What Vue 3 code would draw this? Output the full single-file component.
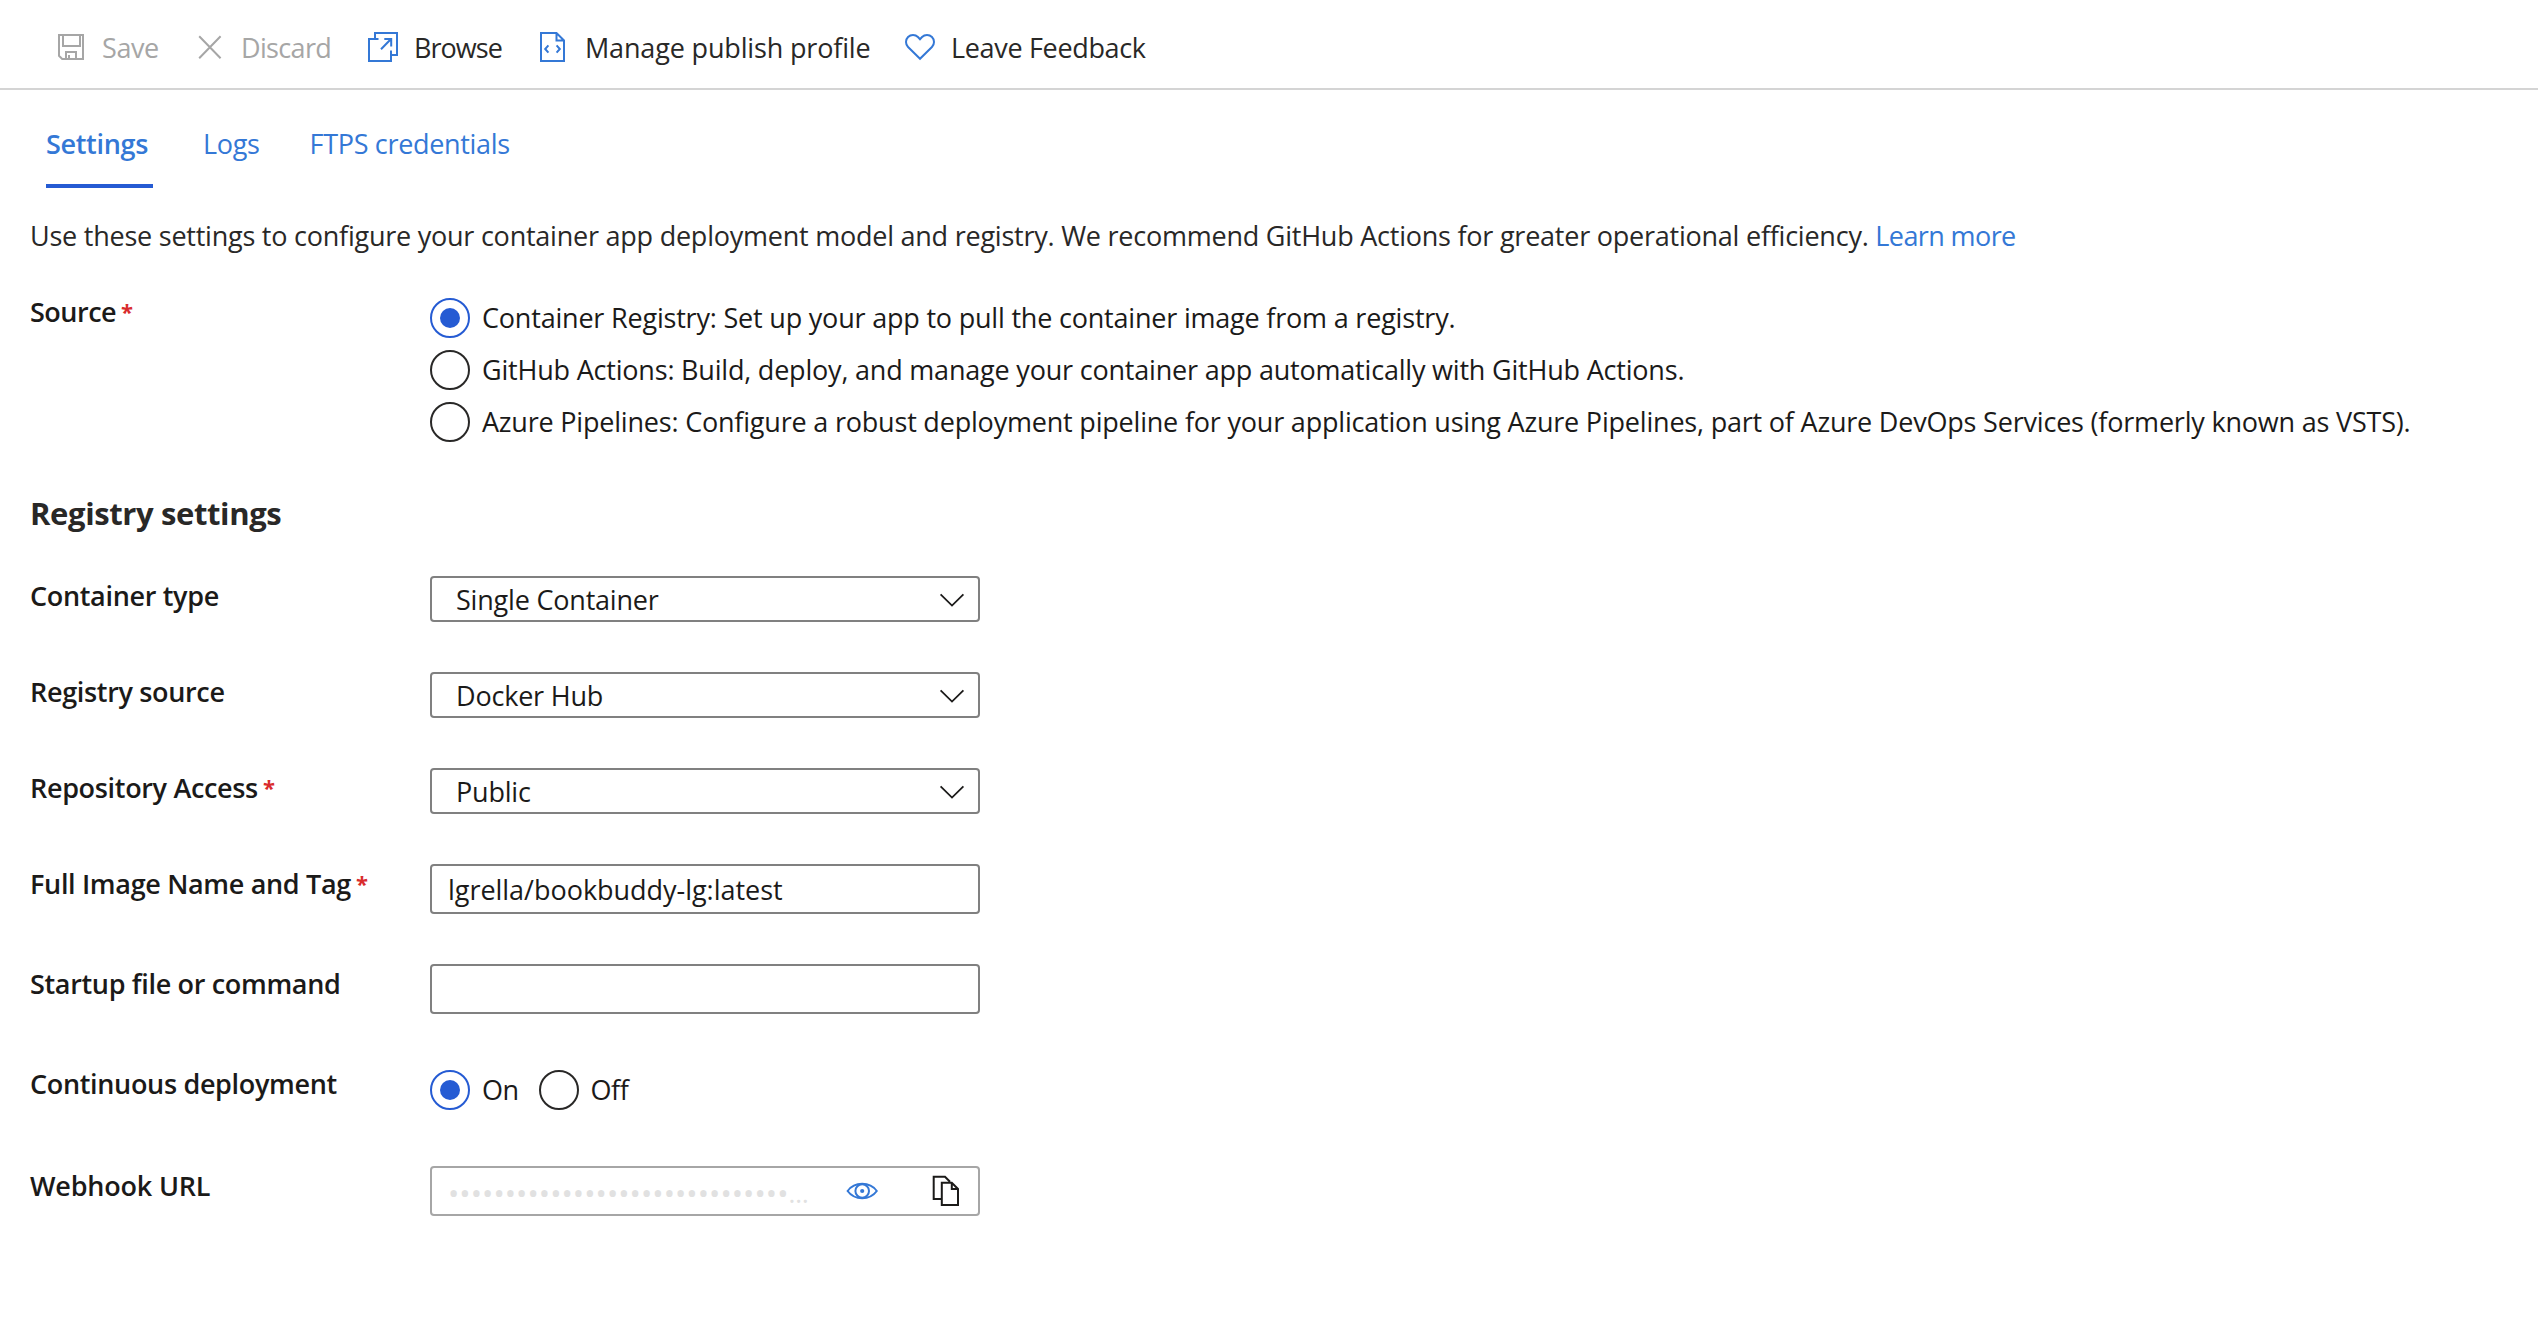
<script setup>
import { ref } from 'vue'

const tabs = ['Settings', 'Logs', 'FTPS credentials']
const activeTab = ref('Settings')

const sources = [
  'Container Registry: Set up your app to pull the container image from a registry.',
  'GitHub Actions: Build, deploy, and manage your container app automatically with GitHub Actions.',
  'Azure Pipelines: Configure a robust deployment pipeline for your application using Azure Pipelines, part of Azure DevOps Services (formerly known as VSTS).',
]
const source = ref(0)

const selects = [
  { label: 'Container type', value: 'Single Container' },
  { label: 'Registry source', value: 'Docker Hub' },
  { label: 'Repository Access', value: 'Public', required: true },
]
const inputs = [
  { label: 'Full Image Name and Tag', value: 'lgrella/bookbuddy-lg:latest', required: true },
  { label: 'Startup file or command', value: '' },
]
const deployment = ref('On')
const mask = '•'.repeat(30)
</script>

<template>
  <div class="page">
    <header class="toolbar">
      <div class="cmd cmd-save disabled">
        <svg width="44" height="37" viewBox="0 0 44 37">
          <path d="M1 6H25V30H4.2L1 26.8Z M5 6V17H22V6 M8 30V23H18V30 M11 26V30" />
        </svg>
        <span>Save</span>
      </div>
      <div class="cmd cmd-discard disabled">
        <svg width="43" height="37" viewBox="0 0 43 37">
          <path d="M1.2 7.2L22.6 29.2M22.6 7.2L1.2 29.2" />
        </svg>
        <span>Discard</span>
      </div>
      <div class="cmd cmd-browse">
        <svg width="46" height="37" viewBox="0 0 46 37">
          <path d="M10.5 10H1V32H23V21.5 M7 10V4H29V26H23 M13 20.3L23 10 M16.3 10H23.2V17.6" />
        </svg>
        <span>Browse</span>
      </div>
      <div class="cmd cmd-profile">
        <svg width="45" height="37" viewBox="0 0 45 37">
          <path d="M1 4H16.5L24 11.5V32H1Z M16.5 4V11.5H24 M8.4 16.4L5.2 20L8.4 23.6 M16.6 16.4L19.8 20L16.6 23.6" />
        </svg>
        <span>Manage publish profile</span>
      </div>
      <div class="cmd cmd-feedback">
        <svg width="46" height="37" viewBox="0 0 46 37">
          <path d="M15 29.8L3.05 17.95A7 7 0 0 1 12.95 8.05L15 10.2L17.05 8.05A7 7 0 0 1 26.95 17.95Z" />
        </svg>
        <span>Leave Feedback</span>
      </div>
    </header>

    <nav class="tabs">
      <a v-for="tab in tabs" :key="tab" class="tab" :class="{ active: tab === activeTab }" @click="activeTab = tab">{{ tab }}</a>
    </nav>

    <main class="content">
      <p class="intro">Use these settings to configure your container app deployment model and registry. We recommend GitHub Actions for greater operational efficiency. <a class="learn">Learn more</a></p>

      <div class="row row-source">
        <label class="label label-source">Source<i class="star">*</i></label>
        <div class="radios">
          <div v-for="(text, i) in sources" :key="i" class="radio" @click="source = i">
            <span class="ring" :class="{ on: source === i }"></span>
            <span class="radio-text">{{ text }}</span>
          </div>
        </div>
      </div>

      <h2 class="heading">Registry settings</h2>

      <div v-for="field in selects" :key="field.label" class="row row-select">
        <label class="label">{{ field.label }}<i v-if="field.required" class="star">*</i></label>
        <div class="box select">
          <span>{{ field.value }}</span>
          <svg class="chevron" width="26" height="14" viewBox="0 0 26 14">
            <path d="M1.6 1.4L13 12.6L24.4 1.4" />
          </svg>
        </div>
      </div>

      <div v-for="field in inputs" :key="field.label" class="row row-input">
        <label class="label">{{ field.label }}<i v-if="field.required" class="star">*</i></label>
        <div class="box input">{{ field.value }}</div>
      </div>

      <div class="row row-deploy">
        <label class="label">Continuous deployment</label>
        <div class="radios inline">
          <div v-for="option in ['On', 'Off']" :key="option" class="radio" @click="deployment = option">
            <span class="ring" :class="{ on: deployment === option }"></span>
            <span class="radio-text">{{ option }}</span>
          </div>
        </div>
      </div>

      <div class="row">
        <label class="label label-webhook">Webhook URL</label>
        <div class="box webhook">
          <div class="mask">{{ mask }}<span class="dots">…</span></div>
          <svg class="eye" width="32" height="18" viewBox="0 0 32 18">
            <path d="M1.6 9C8.6 -0.6 23.8 -0.6 30.8 9C23.8 18.6 8.6 18.6 1.6 9Z" />
            <circle cx="16.2" cy="9" r="6.8" />
            <circle class="pupil" cx="16.2" cy="9" r="2.1" />
          </svg>
          <svg class="copy" width="28" height="31" viewBox="0 0 28 31">
            <path d="M9 24H1.7V1.8H13L18 6.8 M9.8 7.8H19.8L26 14V30H9.8Z M19.8 7.8V14H26" />
          </svg>
        </div>
      </div>
    </main>
  </div>
</template>

<style>
body {
  margin: 0;
  background: #fff;
}
</style>

<style scoped>
.page {
  height: 1318px;
  overflow: hidden;
  background: #fff;
  color: #1b1a19;
  font: 400 27px/37px "Open Sans", "Noto Sans", sans-serif;
  letter-spacing: -0.2px;
  white-space: nowrap;
}
svg {
  flex: none;
  fill: none;
  stroke: #3478d6;
  stroke-width: 2;
}

.toolbar {
  display: flex;
  box-sizing: border-box;
  height: 90px;
  padding: 29px 0 0 58px;
  border-bottom: 2px solid #d4d4d4;
  color: #292827;
}
.cmd { display: flex; }
.cmd-save { width: 140px; letter-spacing: -0.43px; }
.cmd-discard { width: 170px; letter-spacing: -0.65px; }
.cmd-browse { width: 172px; letter-spacing: -0.96px; }
.cmd-profile { width: 365px; letter-spacing: -0.16px; }
.cmd-feedback { letter-spacing: -0.33px; }
.disabled { color: #a6a6a6; }
.disabled svg { stroke: #a6a6a6; }

.tabs {
  display: flex;
  gap: 50px;
  height: 63px;
  padding: 35px 0 0 46px;
  color: #3478d6;
  letter-spacing: -0.32px;
}
.tab {
  box-sizing: border-box;
  height: 63px;
}
.tab.active {
  width: 107px;
  border-bottom: 4px solid #255bd3;
  font-weight: 600;
}

.content { padding: 29px 0 0 30px; }
.intro {
  margin: 0;
  color: #292827;
  letter-spacing: -0.235px;
}
.learn {
  color: #3478d6;
  letter-spacing: -0.6px;
}

.row {
  display: flex;
  align-items: flex-start;
}
.row-source { height: 200px; margin-top: 38px; }
.row-select { height: 96px; }
.row-input { height: 100px; }
.row-deploy { height: 102px; }
.label {
  box-sizing: border-box;
  flex: none;
  width: 400px;
  padding-top: 1px;
  font-weight: 600;
  letter-spacing: -0.33px;
}
.label-source { letter-spacing: -0.5px; }
.label-webhook { letter-spacing: -0.2px; }
.star {
  margin-left: 5px;
  color: #d92c2c;
  font-size: 22px;
  font-style: normal;
  font-weight: 700;
  line-height: 0;
  vertical-align: 2px;
}

.radios {
  display: flex;
  flex-direction: column;
  gap: 12px;
  padding-top: 6px;
}
.radios.inline {
  flex-direction: row;
  gap: 20px;
}
.radio { display: flex; }
.ring {
  display: flex;
  box-sizing: border-box;
  width: 40px;
  height: 40px;
  align-items: center;
  justify-content: center;
  border: 2px solid #292827;
  border-radius: 50%;
}
.ring.on { border-color: #255bd3; }
.ring.on::after {
  content: "";
  width: 20px;
  height: 20px;
  border-radius: 50%;
  background: #255bd3;
}
.radio-text { margin: 1px 0 0 12px; }
.inline .radio-text { letter-spacing: -0.5px; }

.heading {
  height: 42px;
  margin: 0 0 42px;
  color: #292827;
  font-size: 31px;
  font-weight: 700;
  line-height: 42px;
  letter-spacing: -0.38px;
}

.box {
  display: flex;
  box-sizing: border-box;
  width: 550px;
  height: 50px;
  border: 2px solid #808080;
  border-radius: 4px;
}
.select {
  height: 46px;
  padding: 3px 13px 0 24px;
  justify-content: space-between;
  letter-spacing: -0.2px;
}
.chevron {
  margin-top: 12px;
  stroke: #1b1a19;
  stroke-width: 1.8;
}
.input {
  padding: 5px 0 0 16px;
  letter-spacing: -0.03px;
}
.webhook {
  align-items: center;
  padding-left: 16px;
  border-color: #a6a6a6;
}
.mask {
  flex: none;
  width: 398px;
  padding-top: 2px;
  color: #e1e1e1;
  font-size: 30px;
  letter-spacing: 0.07px;
}
.dots {
  font-size: 26px;
  line-height: 0;
  vertical-align: 1px;
}
.pupil {
  fill: #3478d6;
  stroke: none;
}
.copy {
  margin: 0 0 2px 54px;
  stroke: #1b1a19;
}
</style>
